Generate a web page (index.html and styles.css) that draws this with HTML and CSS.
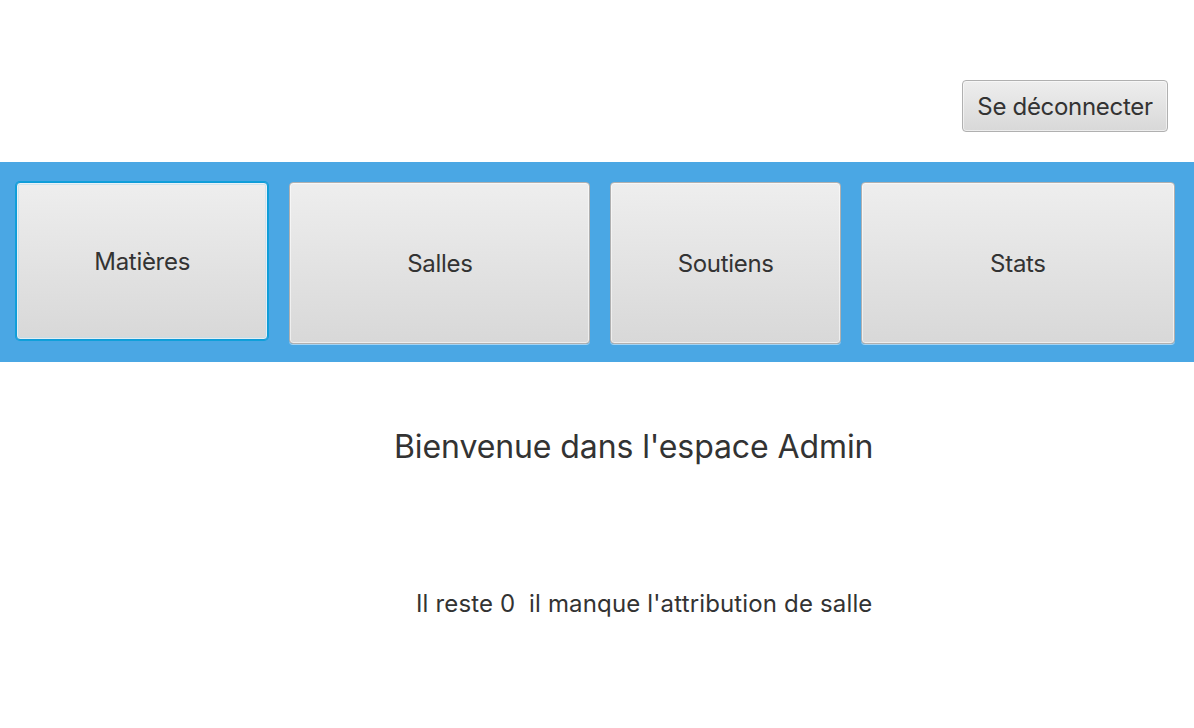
FILE: index.html
```html
<!DOCTYPE html>
<html lang="fr">
<head>
<meta charset="utf-8">
<title>Espace Admin</title>
<link rel="stylesheet" href="styles.css">
</head>
<body>
<div class="app">
  <header class="top">
    <button class="btn logout">Se déconnecter</button>
  </header>
  <nav class="band">
    <button class="btn tile focused tile-matieres">Matières</button>
    <button class="btn tile tile-salles">Salles</button>
    <button class="btn tile tile-soutiens">Soutiens</button>
    <button class="btn tile tile-stats">Stats</button>
  </nav>
  <main class="content">
    <h1 class="welcome">Bienvenue dans l'espace Admin</h1>
    <p class="info">Il reste 0&nbsp; il manque l'attribution de salle</p>
  </main>
</div>
</body>
</html>
```
FILE: styles.css
```css
html, body {
  margin: 0;
  padding: 0;
  background: #ffffff;
}
body {
  font-family: Inter, "Noto Sans", "Liberation Sans", sans-serif;
  color: #333333;
  width: 1194px;
  height: 728px;
  overflow: hidden;
}
.app {
  display: flex;
  flex-direction: column;
}
.top {
  height: 162px;
  display: flex;
  justify-content: flex-end;
  align-items: flex-start;
  padding: 80px 26px 0 0;
  box-sizing: border-box;
}
.btn {
  font-family: inherit;
  color: #333333;
  background: linear-gradient(#eeeeee, #d8d8d8);
  border: 1px solid #b0b0b0;
  border-radius: 4px;
  box-shadow: inset 0 0 0 1px rgba(255,255,255,0.55), 0 1px 0 rgba(255,255,255,0.5);
  padding: 0;
  margin: 0;
  letter-spacing: -0.3px;
  cursor: default;
}
.logout {
  width: 206px;
  height: 52px;
  font-size: 24px;
}
.band {
  height: 200px;
  background: #4aa7e4;
  display: flex;
  align-items: flex-start;
  padding: 20px 19px 0 16px;
  box-sizing: border-box;
  gap: 20px;
}
.tile {
  height: 162px;
  font-size: 24px;
  margin-top: 0;
}
.tile-matieres {
  width: 253px;
  height: 158px;
  margin-right: 1px;
}
.tile-salles { width: 302px; }
.tile-soutiens { width: 231px; }
.tile-stats { width: 315px; }
.tile.focused {
  border-color: #0f9bd8;
  box-shadow: 0 0 0 1px #0fa0da, inset 0 0 0 1px rgba(255,255,255,0.5), inset 0 0 0 2px rgba(190,220,235,0.6);
}
.content {
  display: flex;
  flex-direction: column;
  align-items: flex-start;
}
.welcome {
  margin: 65px 0 0 394px;
  font-size: 32px;
  font-weight: 400;
  letter-spacing: -0.1px;
  line-height: 40px;
}
.info {
  margin: 122px 0 0 416px;
  font-size: 24px;
  letter-spacing: 0.15px;
  line-height: 30px;
}
```
